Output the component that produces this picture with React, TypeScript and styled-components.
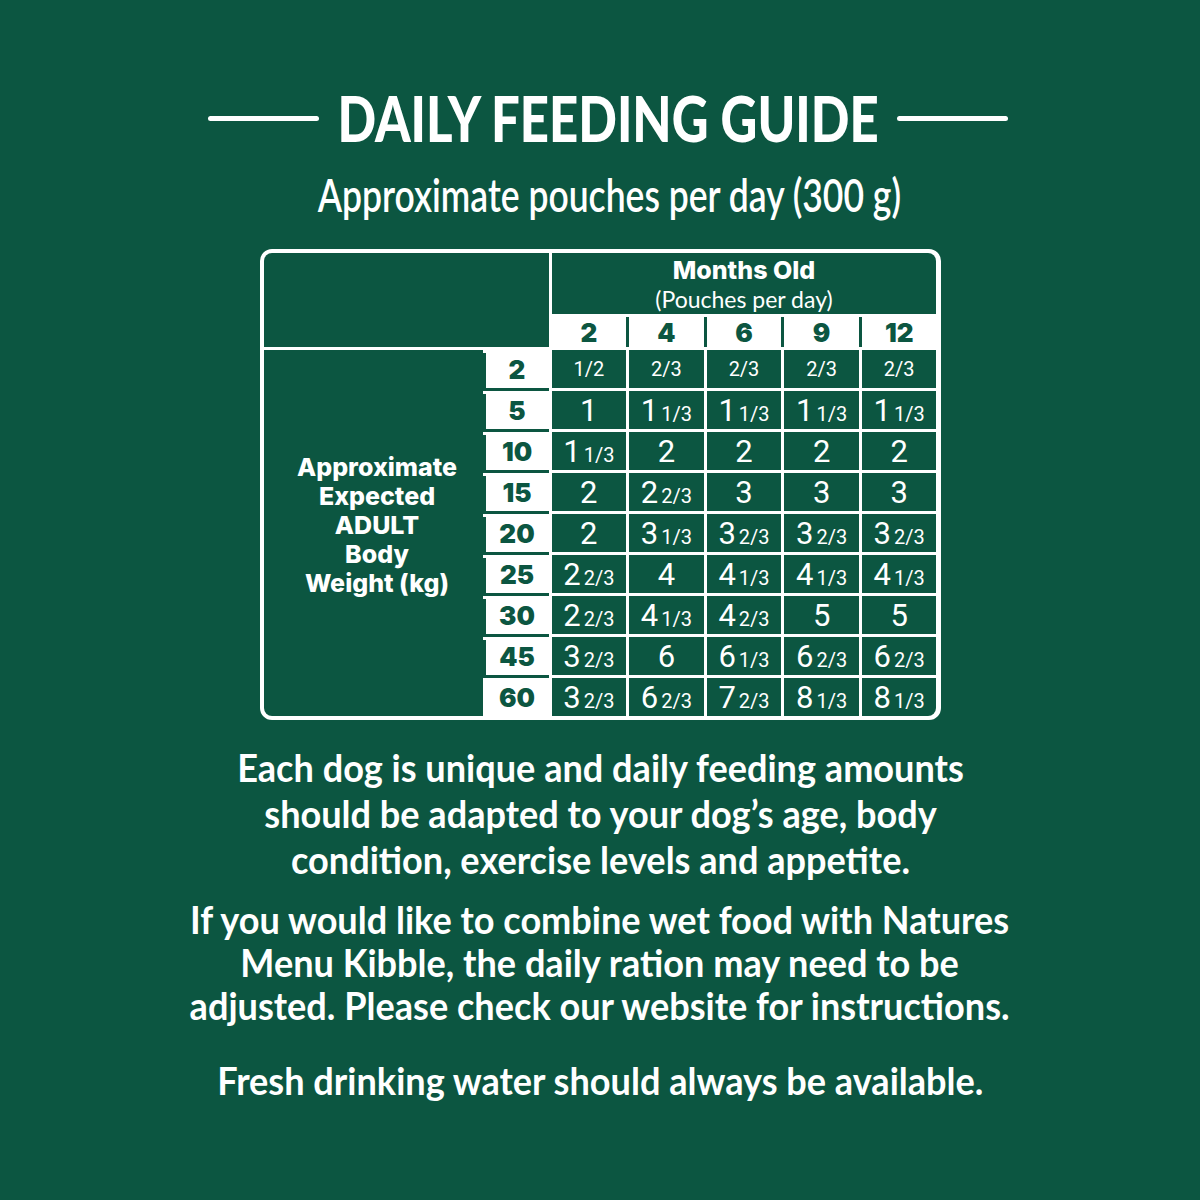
import React from "react";
import styled, { createGlobalStyle } from "styled-components";

const GREEN = "#0c5641";
const WHITE = "#ffffff";

const Global = createGlobalStyle`
  html, body { margin: 0; padding: 0; background: ${GREEN}; }
  body { font-family: Lato, "Open Sans", sans-serif; }
`;

const Page = styled.main`
  width: 1200px;
  height: 1200px;
  box-sizing: border-box;
  padding-top: 83px;
  display: flex;
  flex-direction: column;
  align-items: center;
  background: ${GREEN};
  color: ${WHITE};
  overflow: hidden;
`;

const TitleRow = styled.div`
  display: flex;
  align-items: center;
  gap: 18px;
  padding-left: 15px;
  height: 70px;
`;

const Rule = styled.span`
  width: 111px;
  height: 5px;
  border-radius: 3px;
  background: ${WHITE};
`;

const TitleBox = styled.div`
  width: 542px;
  display: flex;
  justify-content: center;
`;

const TitleText = styled.h1`
  margin: 0;
  flex-shrink: 0;
  font-family: Lato, sans-serif;
  font-weight: 900;
  font-size: 62px;
  line-height: 70px;
  white-space: nowrap;
  transform: scaleX(0.82);
`;

const Subtitle = styled.p`
  margin: 13px 0 0 18px;
  font-family: Lato, sans-serif;
  font-weight: 600;
  font-size: 47px;
  line-height: 56px;
  white-space: nowrap;
  transform: scaleX(0.755);
`;

const Table = styled.div`
  margin-top: 27px;
  width: 681px;
  box-sizing: border-box;
  display: grid;
  grid-template-columns: 219px 63px repeat(5, 1fr);
  grid-template-rows: 61px 30px repeat(9, 38px);
  gap: 3px;
  background: ${WHITE};
  border: 4px solid ${WHITE};
  border-radius: 12px;
`;

const Corner = styled.div`
  grid-column: 1 / 3;
  grid-row: 1 / 3;
  background: ${GREEN};
  border-top-left-radius: 8px;
`;

const MonthsHead = styled.div`
  grid-column: 3 / 8;
  grid-row: 1;
  background: ${GREEN};
  border-top-right-radius: 8px;
  display: flex;
  flex-direction: column;
  align-items: center;
  justify-content: center;
`;

const MonthsTitle = styled.span`
  font-family: Inter, sans-serif;
  font-weight: 800;
  font-size: 25px;
  line-height: normal;
`;

const MonthsSub = styled.span`
  font-family: Lato, sans-serif;
  font-weight: 400;
  font-size: 23px;
  line-height: normal;
`;

const AgeCell = styled.div<{ $last: boolean }>`
  grid-row: 2;
  background: ${WHITE};
  color: ${GREEN};
  display: flex;
  align-items: center;
  justify-content: center;
  font-family: Inter, sans-serif;
  font-weight: 900;
  font-size: 26px;
  box-shadow: ${(p) => (p.$last ? "none" : `3px 0 0 ${GREEN}`)};
`;

const Label = styled.div`
  grid-column: 1;
  grid-row: 3 / 12;
  background: ${GREEN};
  border-bottom-left-radius: 8px;
  display: flex;
  align-items: center;
  justify-content: center;
  padding: 0 0 16px 8px;
  text-align: center;
  font-family: Inter, sans-serif;
  font-weight: 800;
  font-size: 25px;
  line-height: 29px;
`;

const WeightCell = styled.div<{ $last: boolean }>`
  grid-column: 2;
  background: ${WHITE};
  color: ${GREEN};
  display: flex;
  align-items: center;
  justify-content: center;
  font-family: Inter, sans-serif;
  font-weight: 900;
  font-size: 26px;
  box-shadow: ${(p) =>
    p.$last ? "none" : `0 3px 0 ${GREEN}, -3px 3px 0 ${GREEN}`};
`;

const Qty = styled.div<{ $corner: boolean }>`
  background: ${GREEN};
  color: ${WHITE};
  display: flex;
  align-items: center;
  justify-content: center;
  font-family: Roboto, sans-serif;
  border-bottom-right-radius: ${(p) => (p.$corner ? "8px" : "0")};
`;

const Whole = styled.span`
  font-size: 31px;
  line-height: 1;
`;

const Frac = styled.span`
  font-size: 20px;
  line-height: 1;
  ${Whole} + & {
    margin-left: 3px;
  }
`;

const Note = styled.p<{ $lh: number; $mt: number }>`
  margin: ${(p) => p.$mt}px 0 0;
  font-family: Lato, sans-serif;
  font-weight: 700;
  font-size: 38px;
  line-height: ${(p) => p.$lh}px;
  text-align: center;
  white-space: nowrap;
  transform: scaleX(0.95);
`;

const ages = ["2", "4", "6", "9", "12"];

const rows: [string, string[]][] = [
  ["2", ["1/2", "2/3", "2/3", "2/3", "2/3"]],
  ["5", ["1", "1 1/3", "1 1/3", "1 1/3", "1 1/3"]],
  ["10", ["1 1/3", "2", "2", "2", "2"]],
  ["15", ["2", "2 2/3", "3", "3", "3"]],
  ["20", ["2", "3 1/3", "3 2/3", "3 2/3", "3 2/3"]],
  ["25", ["2 2/3", "4", "4 1/3", "4 1/3", "4 1/3"]],
  ["30", ["2 2/3", "4 1/3", "4 2/3", "5", "5"]],
  ["45", ["3 2/3", "6", "6 1/3", "6 2/3", "6 2/3"]],
  ["60", ["3 2/3", "6 2/3", "7 2/3", "8 1/3", "8 1/3"]],
];

function Amount({ value }: { value: string }) {
  const parts = value.split(" ");
  return (
    <span>
      {parts.map((p, i) =>
        p.includes("/") ? <Frac key={i}>{p}</Frac> : <Whole key={i}>{p}</Whole>
      )}
    </span>
  );
}

export default function App() {
  return (
    <>
      <Global />
      <Page>
        <TitleRow>
          <Rule />
          <TitleBox>
            <TitleText>DAILY FEEDING GUIDE</TitleText>
          </TitleBox>
          <Rule />
        </TitleRow>
        <Subtitle>Approximate pouches per day (300 g)</Subtitle>

        <Table>
          <Corner />
          <MonthsHead>
            <MonthsTitle>Months Old</MonthsTitle>
            <MonthsSub>(Pouches per day)</MonthsSub>
          </MonthsHead>
          {ages.map((a, i) => (
            <AgeCell key={a} $last={i === ages.length - 1}>
              {a}
            </AgeCell>
          ))}
          <Label>
            Approximate
            <br />
            Expected
            <br />
            ADULT
            <br />
            Body
            <br />
            Weight (kg)
          </Label>
          {rows.map(([w, vals], r) => (
            <React.Fragment key={w}>
              <WeightCell $last={r === rows.length - 1}>{w}</WeightCell>
              {vals.map((v, c) => (
                <Qty key={c} $corner={r === rows.length - 1 && c === vals.length - 1}>
                  <Amount value={v} />
                </Qty>
              ))}
            </React.Fragment>
          ))}
        </Table>

        <Note $lh={46} $mt={24}>
          Each dog is unique and daily feeding amounts
          <br />
          should be adapted to your dog’s age, body
          <br />
          condition, exercise levels and appetite.
        </Note>
        <Note $lh={43} $mt={16}>
          If you would like to combine wet food with Natures
          <br />
          Menu Kibble, the daily ration may need to be
          <br />
          adjusted. Please check our website for instructions.
        </Note>
        <Note $lh={44} $mt={31}>
          Fresh drinking water should always be available.
        </Note>
      </Page>
    </>
  );
}
